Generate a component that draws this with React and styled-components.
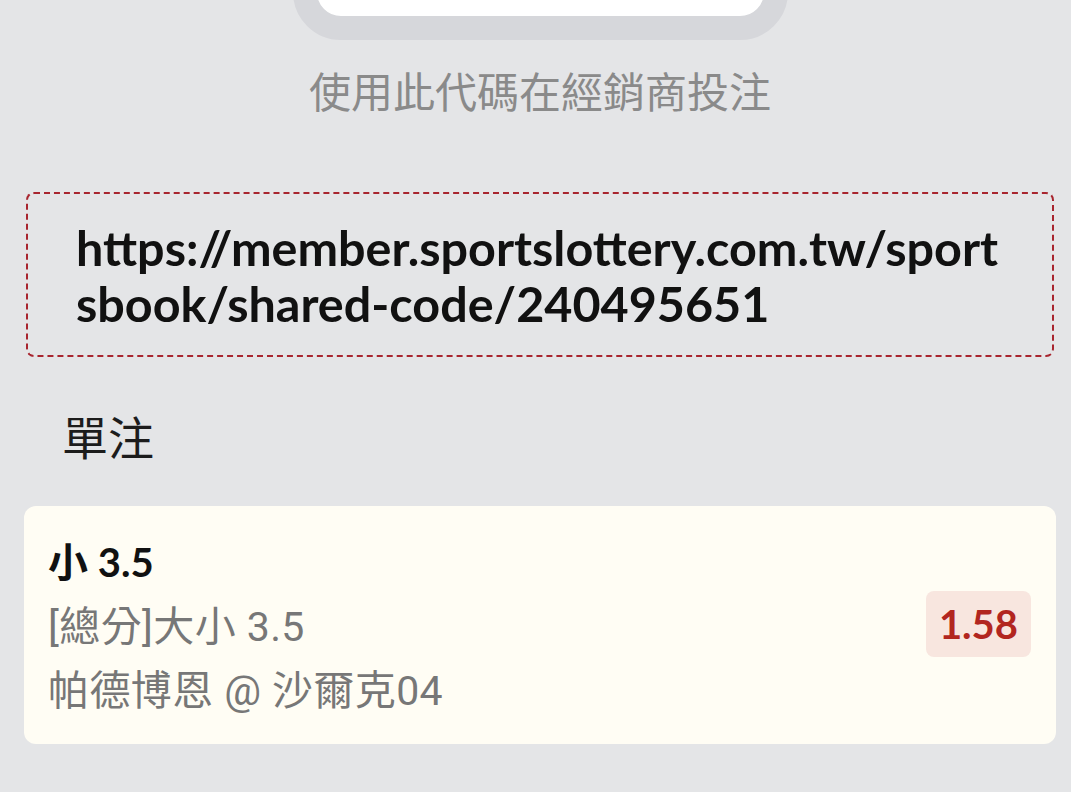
import React from "react";
import styled, { createGlobalStyle } from "styled-components";

const GlobalStyle = createGlobalStyle`
  html, body {
    margin: 0;
    padding: 0;
    background: #e4e5e7;
  }
  body {
    font-family: Lato, "Noto Sans CJK TC", sans-serif;
    overflow: hidden;
  }
`;

const Page = styled.div`
  width: 1080px;
  display: flex;
  flex-direction: column;
  align-items: center;
`;

const CodeRing = styled.div`
  width: 447px;
  height: 200px;
  margin-top: -208px;
  border: 24px solid #d6d7db;
  border-radius: 48px;
  background: #ffffff;
`;

const Hint = styled.div`
  margin-top: 26px;
  font-size: 42px;
  line-height: 48px;
  color: #8a8a8a;
  font-family: "Noto Sans CJK TC", sans-serif;
`;

const LinkBox = styled.div`
  align-self: stretch;
  margin: 78px 26px 0;
  padding: 25px 48px 24px 48px;
  border: 2px dashed #a8252f;
  border-radius: 8px;
  font-family: Lato, sans-serif;
  font-weight: 700;
  font-size: 48.5px;
  line-height: 56px;
  color: #111;
  word-break: break-all;
`;

const SectionTitle = styled.div`
  align-self: stretch;
  margin: 50px 0 0 62px;
  font-family: "Noto Sans CJK TC", sans-serif;
  font-size: 46px;
  line-height: 56px;
  color: #1c1c1c;
`;

const Card = styled.div`
  align-self: stretch;
  margin: 43px 24px 0;
  padding: 30px 25px 21px 24px;
  background: #fffdf4;
  border-radius: 12px;
  display: flex;
  align-items: center;
  justify-content: space-between;
`;

const Info = styled.div`
  display: flex;
  flex-direction: column;
`;

const Pick = styled.div`
  font-family: Lato, "Noto Sans CJK TC", sans-serif;
  font-weight: 700;
  font-size: 40px;
  line-height: 52px;
  color: #111;
  margin-bottom: 7px;
`;

const Meta = styled.div`
  font-family: Roboto, "Noto Sans CJK TC", sans-serif;
  font-size: 41px;
  line-height: 64px;
  color: #777;
  letter-spacing: 0.4px;
`;

const Odds = styled.div`
  padding: 6px 13px;
  margin-bottom: 12px;
  background: #f8e6df;
  border-radius: 8px;
  font-family: Lato, sans-serif;
  font-weight: 700;
  font-size: 40px;
  line-height: 54px;
  color: #b2261f;
`;

export default function App() {
  return (
    <>
      <GlobalStyle />
      <Page>
        <CodeRing />
        <Hint>使用此代碼在經銷商投注</Hint>
        <LinkBox>https://member.sportslottery.com.tw/sportsbook/shared-code/240495651</LinkBox>
        <SectionTitle>單注</SectionTitle>
        <Card>
          <Info>
            <Pick>小 3.5</Pick>
            <Meta>[總分]大小 3.5</Meta>
            <Meta>帕德博恩 @ 沙爾克04</Meta>
          </Info>
          <Odds>1.58</Odds>
        </Card>
      </Page>
    </>
  );
}
